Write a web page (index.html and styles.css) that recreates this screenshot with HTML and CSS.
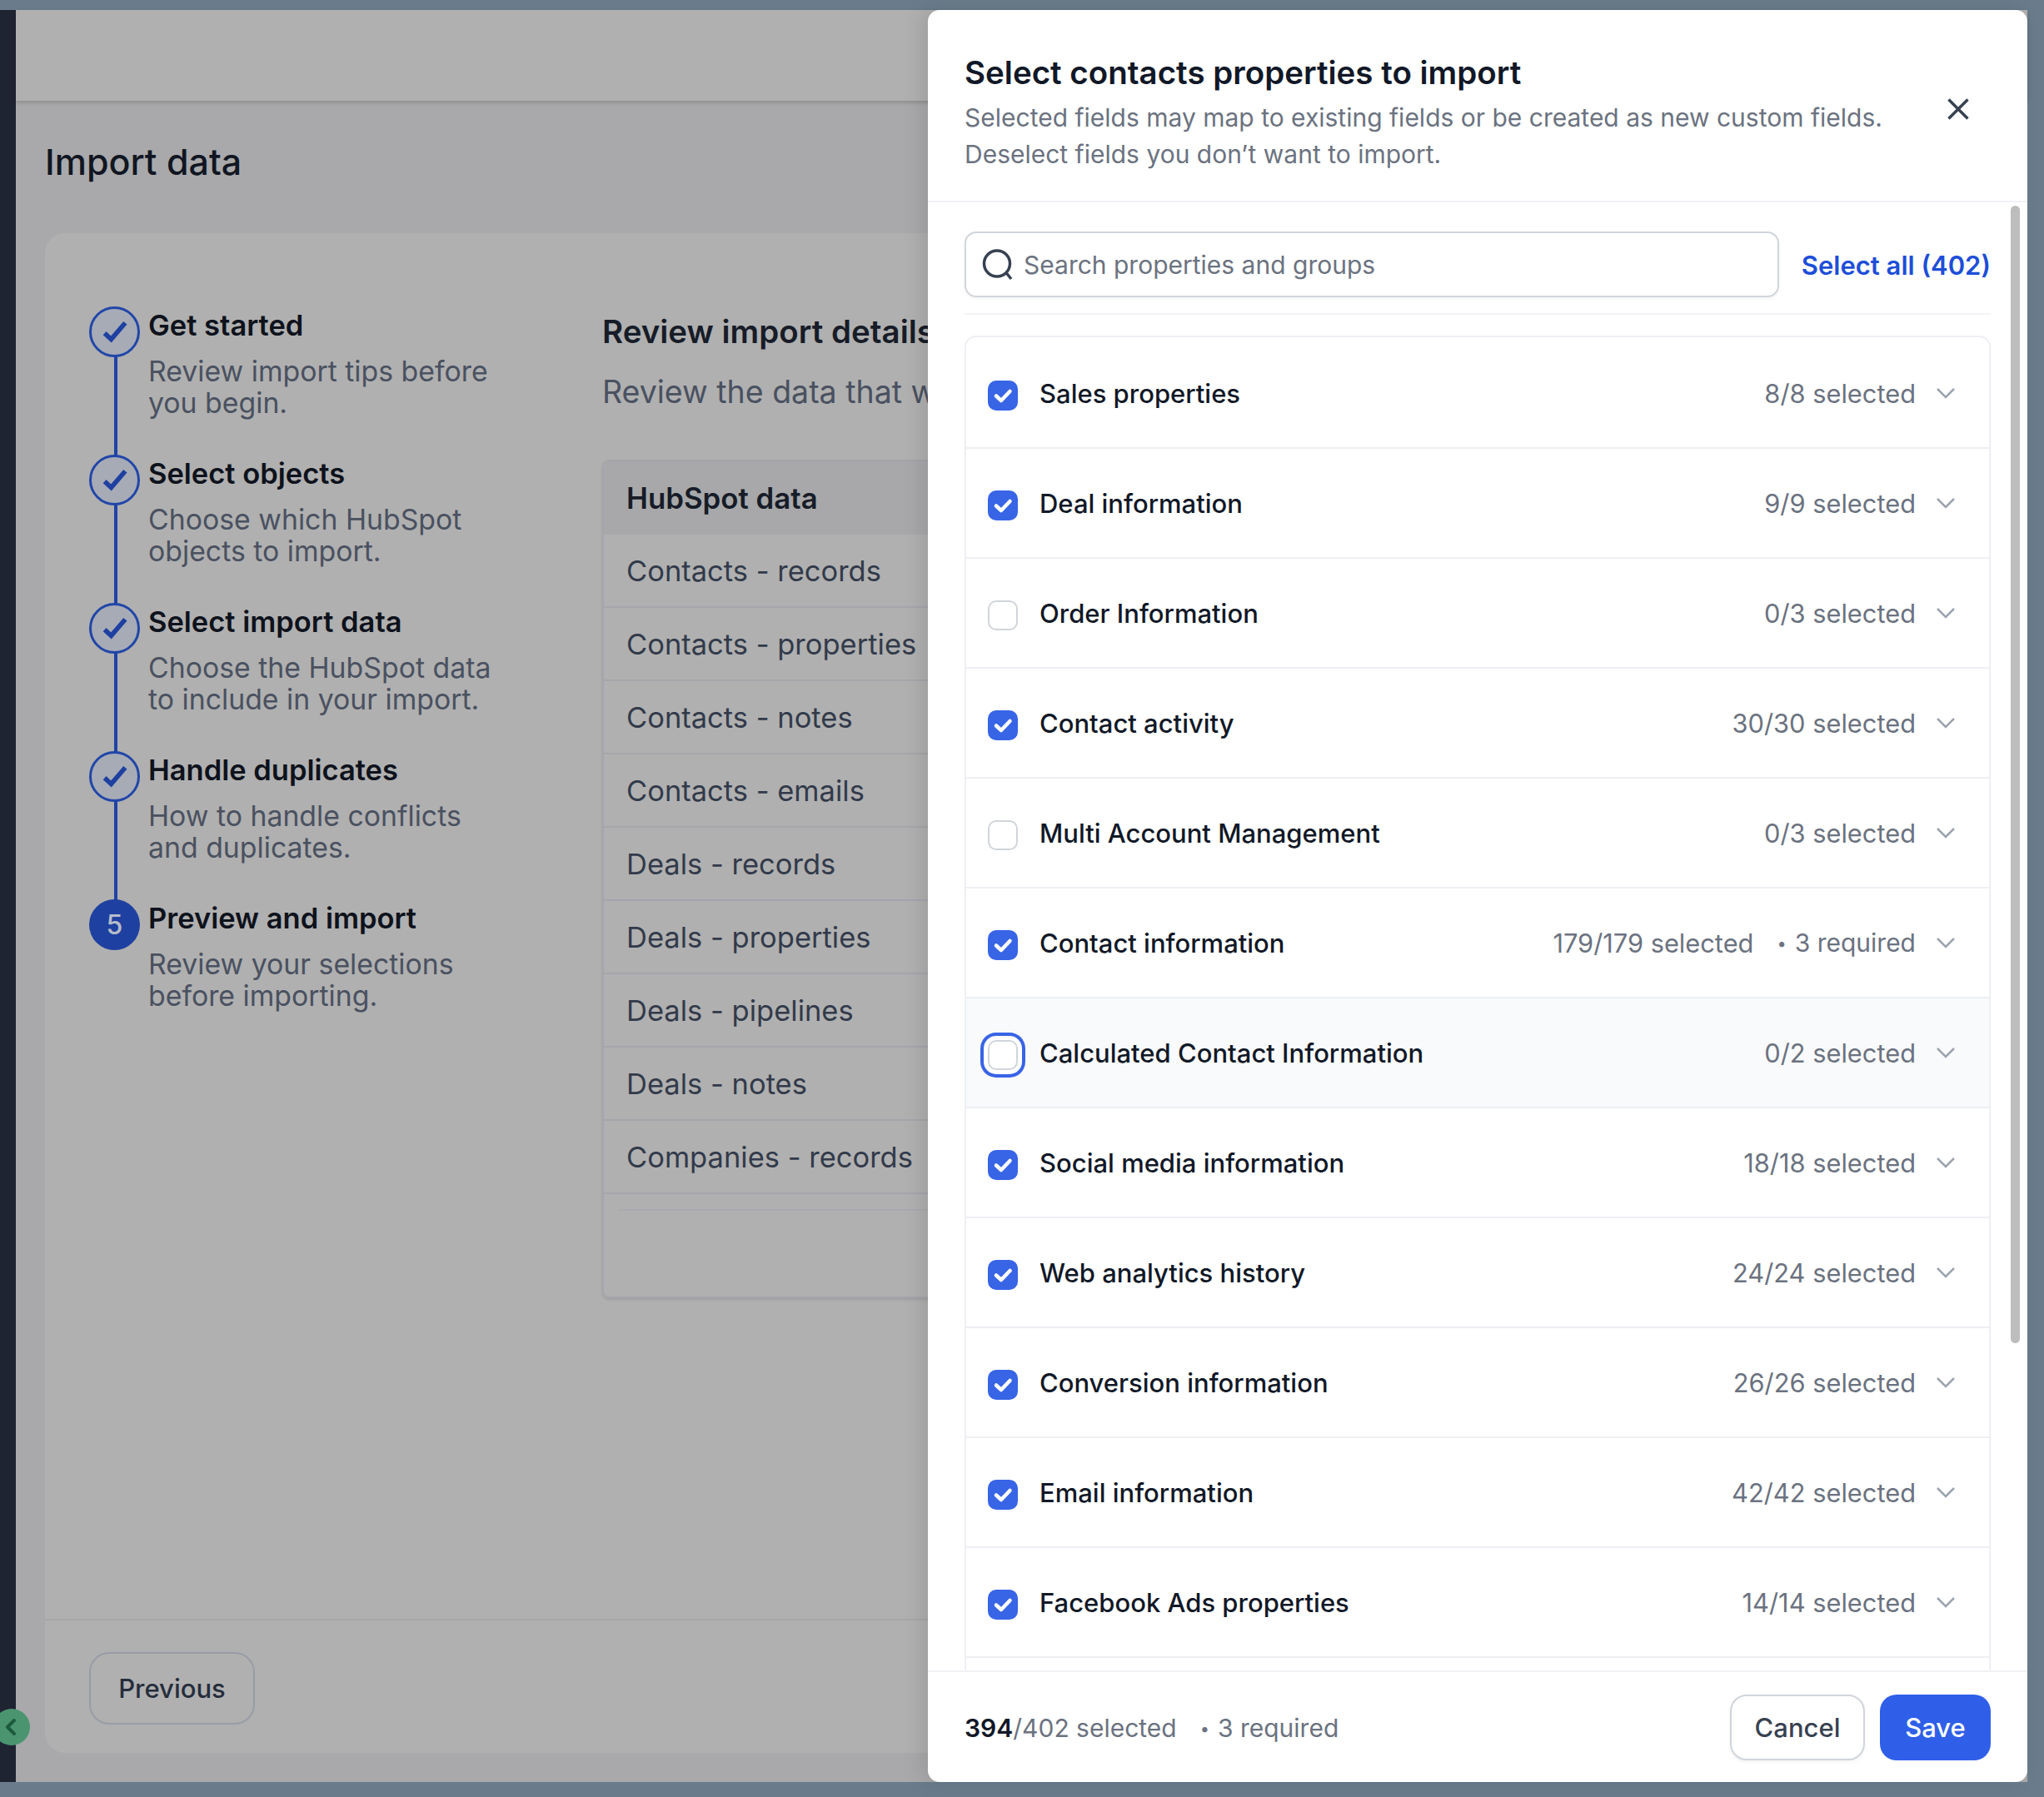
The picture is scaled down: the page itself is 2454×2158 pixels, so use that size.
FILE: index.html
```html
<!DOCTYPE html>
<html lang="en">

<head>
    <meta charset="UTF-8">
    <title>Import data</title>
    <link rel="stylesheet" href="styles.css">
</head>

<body>
    <div class="window">
        <div class="sidebar"></div>
        <div class="app">
            <div class="topbar"></div>
            <h1 class="page-title">Import data</h1>
            <div class="card">
                <div class="card-body">
                    <ol class="steps">
                        <li class="step done">
                            <span class="step-dot"><svg viewBox="0 0 32 32"><path d="M5 17l7 6.5L27 6" /></svg></span>
                            <div>
                                <div class="step-title">Get started</div>
                                <div class="step-desc">Review import tips before<br>you begin.</div>
                            </div>
                        </li>
                        <li class="step done">
                            <span class="step-dot"><svg viewBox="0 0 32 32"><path d="M5 17l7 6.5L27 6" /></svg></span>
                            <div>
                                <div class="step-title">Select objects</div>
                                <div class="step-desc">Choose which HubSpot<br>objects to import.</div>
                            </div>
                        </li>
                        <li class="step done">
                            <span class="step-dot"><svg viewBox="0 0 32 32"><path d="M5 17l7 6.5L27 6" /></svg></span>
                            <div>
                                <div class="step-title">Select import data</div>
                                <div class="step-desc">Choose the HubSpot data<br>to include in your import.</div>
                            </div>
                        </li>
                        <li class="step done">
                            <span class="step-dot"><svg viewBox="0 0 32 32"><path d="M5 17l7 6.5L27 6" /></svg></span>
                            <div>
                                <div class="step-title">Handle duplicates</div>
                                <div class="step-desc">How to handle conflicts<br>and duplicates.</div>
                            </div>
                        </li>
                        <li class="step current">
                            <span class="step-dot">5</span>
                            <div>
                                <div class="step-title">Preview and import</div>
                                <div class="step-desc">Review your selections<br>before importing.</div>
                            </div>
                        </li>
                    </ol>
                    <div class="review">
                        <h2 class="review-title">Review import details</h2>
                        <p class="review-sub">Review the data that will</p>
                        <div class="data-table">
                            <div class="data-head">HubSpot data</div>
                            <div class="data-row">Contacts - records</div>
                            <div class="data-row">Contacts - properties</div>
                            <div class="data-row">Contacts - notes</div>
                            <div class="data-row">Contacts - emails</div>
                            <div class="data-row">Deals - records</div>
                            <div class="data-row">Deals - properties</div>
                            <div class="data-row">Deals - pipelines</div>
                            <div class="data-row">Deals - notes</div>
                            <div class="data-row">Companies - records</div>
                            <div class="data-end"></div>
                        </div>
                    </div>
                </div>
                <div class="card-foot">
                    <button class="btn-previous">Previous</button>
                </div>
            </div>
        </div>

        <!-- collapse handle sits over the sidebar edge -->
        <span class="collapse-handle"><svg viewBox="0 0 24 24"><path d="M15 4l-8 8 8 8" /></svg></span>

        <div class="modal">
            <div class="modal-head">
                <div>
                    <h2 class="modal-title">Select contacts properties to import</h2>
                    <p class="modal-sub">Selected fields may map to existing fields or be created as new custom fields.<br>Deselect fields you don’t want to import.</p>
                </div>
                <svg class="close-icon" viewBox="0 0 26 26"><path d="M1.5 1.5l23 23M24.5 1.5l-23 23" /></svg>
            </div>

            <div class="modal-body">
                <div class="scroll-thumb"></div>
                <div class="search-row">
                    <div class="search-box">
                        <svg class="search-icon" viewBox="0 0 38 38"><circle cx="18" cy="17.5" r="15.5" /><path d="M29 28.5l6 7.5" /></svg>
                        <span>Search properties and groups</span>
                    </div>
                    <span class="select-all">Select all (402)</span>
                </div>
                <div class="prop-list">
                    <div class="prop-row">
                        <span class="check on"><svg viewBox="0 0 36 36"><path d="M10 18.5l6 5.5 10.5-11" /></svg></span>
                        <span class="prop-name">Sales properties</span>
                        <span class="prop-count">8/8 selected</span>
                        <svg class="chevron" viewBox="0 0 22 14"><path d="M1 2l10 10L21 2" /></svg>
                    </div>
                    <div class="prop-row">
                        <span class="check on"><svg viewBox="0 0 36 36"><path d="M10 18.5l6 5.5 10.5-11" /></svg></span>
                        <span class="prop-name">Deal information</span>
                        <span class="prop-count">9/9 selected</span>
                        <svg class="chevron" viewBox="0 0 22 14"><path d="M1 2l10 10L21 2" /></svg>
                    </div>
                    <div class="prop-row">
                        <span class="check"></span>
                        <span class="prop-name">Order Information</span>
                        <span class="prop-count">0/3 selected</span>
                        <svg class="chevron" viewBox="0 0 22 14"><path d="M1 2l10 10L21 2" /></svg>
                    </div>
                    <div class="prop-row">
                        <span class="check on"><svg viewBox="0 0 36 36"><path d="M10 18.5l6 5.5 10.5-11" /></svg></span>
                        <span class="prop-name">Contact activity</span>
                        <span class="prop-count">30/30 selected</span>
                        <svg class="chevron" viewBox="0 0 22 14"><path d="M1 2l10 10L21 2" /></svg>
                    </div>
                    <div class="prop-row">
                        <span class="check"></span>
                        <span class="prop-name">Multi Account Management</span>
                        <span class="prop-count">0/3 selected</span>
                        <svg class="chevron" viewBox="0 0 22 14"><path d="M1 2l10 10L21 2" /></svg>
                    </div>
                    <div class="prop-row">
                        <span class="check on"><svg viewBox="0 0 36 36"><path d="M10 18.5l6 5.5 10.5-11" /></svg></span>
                        <span class="prop-name">Contact information</span>
                        <span class="prop-count">179/179 selected</span>
                        <span class="prop-required">3 required</span>
                        <svg class="chevron" viewBox="0 0 22 14"><path d="M1 2l10 10L21 2" /></svg>
                    </div>
                    <div class="prop-row hover">
                        <span class="check focus"></span>
                        <span class="prop-name">Calculated Contact Information</span>
                        <span class="prop-count">0/2 selected</span>
                        <svg class="chevron" viewBox="0 0 22 14"><path d="M1 2l10 10L21 2" /></svg>
                    </div>
                    <div class="prop-row">
                        <span class="check on"><svg viewBox="0 0 36 36"><path d="M10 18.5l6 5.5 10.5-11" /></svg></span>
                        <span class="prop-name">Social media information</span>
                        <span class="prop-count">18/18 selected</span>
                        <svg class="chevron" viewBox="0 0 22 14"><path d="M1 2l10 10L21 2" /></svg>
                    </div>
                    <div class="prop-row">
                        <span class="check on"><svg viewBox="0 0 36 36"><path d="M10 18.5l6 5.5 10.5-11" /></svg></span>
                        <span class="prop-name">Web analytics history</span>
                        <span class="prop-count">24/24 selected</span>
                        <svg class="chevron" viewBox="0 0 22 14"><path d="M1 2l10 10L21 2" /></svg>
                    </div>
                    <div class="prop-row">
                        <span class="check on"><svg viewBox="0 0 36 36"><path d="M10 18.5l6 5.5 10.5-11" /></svg></span>
                        <span class="prop-name">Conversion information</span>
                        <span class="prop-count">26/26 selected</span>
                        <svg class="chevron" viewBox="0 0 22 14"><path d="M1 2l10 10L21 2" /></svg>
                    </div>
                    <div class="prop-row">
                        <span class="check on"><svg viewBox="0 0 36 36"><path d="M10 18.5l6 5.5 10.5-11" /></svg></span>
                        <span class="prop-name">Email information</span>
                        <span class="prop-count">42/42 selected</span>
                        <svg class="chevron" viewBox="0 0 22 14"><path d="M1 2l10 10L21 2" /></svg>
                    </div>
                    <div class="prop-row">
                        <span class="check on"><svg viewBox="0 0 36 36"><path d="M10 18.5l6 5.5 10.5-11" /></svg></span>
                        <span class="prop-name">Facebook Ads properties</span>
                        <span class="prop-count">14/14 selected</span>
                        <svg class="chevron" viewBox="0 0 22 14"><path d="M1 2l10 10L21 2" /></svg>
                    </div>
                </div>
            </div>

            <div class="modal-foot">
                <div class="foot-count"><strong>394</strong>/402 selected<span class="prop-required">3 required</span></div>
                <button class="btn-cancel">Cancel</button>
                <button class="btn-save">Save</button>
            </div>
        </div>
    </div>
</body>

</html>
```

FILE: styles.css
```css
/* Page frame */
html,
body {
    margin: 0;
    padding: 0;
}

body {
    font-family: Inter, "Noto Sans", sans-serif;
    color: #111827;
}

h1,
h2,
p,
ol {
    margin: 0;
    padding: 0;
}

.window {
    position: relative;
    width: 2454px;
    height: 2158px;
    box-sizing: border-box;
    padding: 12px 20px 18px 0;
    display: flex;
    background-color: #6a7c8b;
    overflow: hidden;
}

.sidebar {
    width: 19px;
    flex-shrink: 0;
    background-color: #1f2433;
}

.app {
    flex: 1;
    min-width: 0;
    display: flex;
    flex-direction: column;
    background-color: #a9a9ab;
}

.topbar {
    height: 109px;
    flex-shrink: 0;
    background-color: #b0b0b0;
    box-shadow: 0 2px 5px rgba(0, 0, 0, 0.18);
}

.page-title {
    margin: 45px 0 0 35px;
    height: 56px;
    font-size: 43px;
    line-height: 56px;
    font-weight: 500;
    color: #111622;
}

/* Background card */
.card {
    margin: 58px 0 35px 35px;
    flex: 1;
    min-height: 0;
    display: flex;
    flex-direction: column;
    background-color: #b0b0b0;
    border-radius: 24px;
}

.card-body {
    flex: 1;
    padding: 88px 0 0 53px;
    display: flex;
    min-height: 0;
}

.steps {
    list-style: none;
    width: 616px;
    flex-shrink: 0;
}

.step {
    position: relative;
    display: flex;
    gap: 10px;
    height: 178px;
}

.step:not(:last-child)::before {
    content: "";
    position: absolute;
    left: 30px;
    top: 60px;
    bottom: -2px;
    width: 4px;
    background-color: #1f43a6;
}

.step-dot {
    width: 61px;
    height: 61px;
    box-sizing: border-box;
    flex-shrink: 0;
    border-radius: 50%;
    display: flex;
    align-items: center;
    justify-content: center;
    font-size: 32px;
    font-weight: 500;
}

.step.done .step-dot {
    border: 3px solid #2146a8;
    background-color: #a7abb6;
}

.step.done .step-dot svg {
    width: 36px;
    height: 36px;
    fill: none;
    stroke: #1e40a0;
    stroke-width: 5;
}

.step.current .step-dot {
    background-color: #1e40a0;
    color: #b6bccb;
}

.step-title {
    margin-top: 3px;
    font-size: 34.5px;
    line-height: 40px;
    font-weight: 600;
    color: #0e121c;
}

.step-desc {
    margin-top: 16px;
    font-size: 33.8px;
    line-height: 38px;
    color: #4a5160;
}

/* runs on under the modal, which covers the right part */
.review {
    width: 391px;
    flex-shrink: 0;
}

.review-title {
    margin-top: 6px;
    font-size: 38.5px;
    line-height: 48px;
    font-weight: 600;
    color: #171c28;
    white-space: nowrap;
}

.review-sub {
    margin-top: 26px;
    font-size: 37.5px;
    line-height: 46px;
    color: #4a5160;
    white-space: nowrap;
}

.data-table {
    margin-top: 58px;
    width: 640px;
    height: 1007px;
    box-sizing: border-box;
    border: 2px solid #a5a6ab;
    border-radius: 8px;
    box-shadow: 0 2px 3px rgba(0, 0, 0, 0.1);
}

.data-head {
    height: 88px;
    padding-left: 27px;
    display: flex;
    align-items: center;
    font-size: 34.8px;
    font-weight: 600;
    color: #171c28;
    background-color: #a8a8aa;
}

.data-row {
    height: 86px;
    padding-left: 27px;
    display: flex;
    align-items: center;
    font-size: 34.5px;
    color: #323a4a;
    border-bottom: 2px solid #a5a6ab;
}

.data-end {
    margin: 18px 0 0 18px;
    border-top: 2px solid #a9aaae;
}

.card-foot {
    height: 161px;
    flex-shrink: 0;
    box-sizing: border-box;
    padding: 38px 0 0 53px;
    border-top: 2px solid #a6a6ab;
}

.btn-previous {
    width: 199px;
    height: 87px;
    border: 2px solid #989ca5;
    border-radius: 24px;
    background: none;
    font-family: inherit;
    font-size: 31px;
    font-weight: 500;
    color: #252d3c;
}

.collapse-handle {
    position: absolute;
    left: -8px;
    top: 2052px;
    width: 44px;
    height: 44px;
    border-radius: 50%;
    display: flex;
    align-items: center;
    justify-content: center;
    background-color: #4a9570;
}

.collapse-handle svg {
    width: 24px;
    height: 24px;
    fill: none;
    stroke: #1c5a3d;
    stroke-width: 4;
    stroke-linecap: round;
    stroke-linejoin: round;
}

/* Modal */
.modal {
    position: absolute;
    left: 1114px;
    top: 12px;
    width: 1320px;
    height: 2128px;
    display: flex;
    flex-direction: column;
    background-color: #fff;
    border-radius: 14px;
    box-shadow: -8px 0 24px rgba(0, 0, 0, 0.1);
}

.modal-head {
    height: 231px;
    flex-shrink: 0;
    box-sizing: border-box;
    padding: 52px 70px 0 44px;
    display: flex;
    justify-content: space-between;
    align-items: flex-start;
    border-bottom: 2px solid #f1f2f6;
}

.modal-title {
    font-size: 38.5px;
    line-height: 47px;
    font-weight: 600;
    color: #111827;
}

.modal-sub {
    margin-top: 8px;
    font-size: 30px;
    line-height: 44px;
    color: #6b7280;
}

.close-icon {
    width: 26px;
    height: 26px;
    margin-top: 54px;
    flex-shrink: 0;
    fill: none;
    stroke: #374151;
    stroke-width: 3.5;
}

.modal-body {
    position: relative;
    flex: 1;
    min-height: 0;
    padding: 0 44px;
    overflow: hidden;
}

.scroll-thumb {
    position: absolute;
    right: 9px;
    top: 4px;
    width: 11px;
    height: 1366px;
    border-radius: 6px;
    background-color: #bdbdbd;
}

.search-row {
    padding: 35px 0 19px;
    display: flex;
    align-items: center;
    justify-content: space-between;
    border-bottom: 2px solid #f3f4f8;
}

.search-box {
    width: 978px;
    height: 79px;
    box-sizing: border-box;
    padding-left: 19px;
    display: flex;
    align-items: center;
    gap: 12px;
    border: 2px solid #d1d5db;
    border-radius: 14px;
    box-shadow: 0 2px 4px rgba(0, 0, 0, 0.05);
    font-size: 30px;
    color: #6b7280;
}

.search-icon {
    width: 38px;
    height: 38px;
    flex-shrink: 0;
    fill: none;
    stroke: #374151;
    stroke-width: 3.5;
}

.select-all {
    margin-top: 2px;
    font-size: 31px;
    font-weight: 600;
    color: #1d4ed8;
}

.prop-list {
    margin-top: 25px;
    padding: 2px 0 60px;
    border: 2px solid #eeeff4;
    border-radius: 14px 14px 0 0;
}

.prop-row {
    height: 130px;
    padding: 0 41px 0 26px;
    display: flex;
    align-items: center;
    border-bottom: 2px solid #eeeff4;
}

.prop-row.hover {
    background-color: #f9fafb;
}

.check {
    width: 36px;
    height: 36px;
    box-sizing: border-box;
    margin-top: 6px;
    flex-shrink: 0;
    border: 2px solid #d1d5db;
    border-radius: 10px;
}

.check.on {
    border: none;
    background-color: #3864e6;
}

.check.on svg {
    display: block;
    width: 36px;
    height: 36px;
    fill: none;
    stroke: #fff;
    stroke-width: 4.5;
    stroke-linecap: round;
    stroke-linejoin: round;
}

.check.focus {
    background-color: #fff;
    box-shadow: 0 0 0 5px #fff, 0 0 0 9px #3864e6;
}

.prop-name {
    flex: 1;
    margin-left: 26px;
    font-size: 31px;
    font-weight: 500;
    color: #111827;
}

.prop-count {
    font-size: 30.8px;
    color: #6b7280;
}

.prop-required {
    margin-left: 28px;
    font-size: 30px;
    color: #6b7280;
}

.prop-required::before {
    content: "•";
    margin-right: 10px;
    font-size: 20px;
    vertical-align: 3px;
}

.chevron {
    width: 22px;
    height: 14px;
    margin-left: 25px;
    flex-shrink: 0;
    fill: none;
    stroke: #9ca3af;
    stroke-width: 2.5;
}

.modal-foot {
    height: 134px;
    flex-shrink: 0;
    box-sizing: border-box;
    padding: 0 44px;
    display: flex;
    align-items: center;
    gap: 18px;
    border-top: 2px solid #f1f2f6;
}

.foot-count {
    flex: 1;
    padding-top: 2px;
    font-size: 30px;
    color: #6b7280;
}

.foot-count strong {
    font-weight: 600;
    color: #111827;
}

.btn-cancel,
.btn-save {
    height: 79px;
    border-radius: 20px;
    font-family: inherit;
    font-size: 31px;
    font-weight: 500;
}

.btn-cancel {
    width: 162px;
    border: 2px solid #d1d5db;
    background-color: #fff;
    color: #374151;
    box-shadow: 0 2px 4px rgba(0, 0, 0, 0.05);
}

.btn-save {
    width: 133px;
    border: none;
    background-color: #2f5fe8;
    color: #fff;
}
```
